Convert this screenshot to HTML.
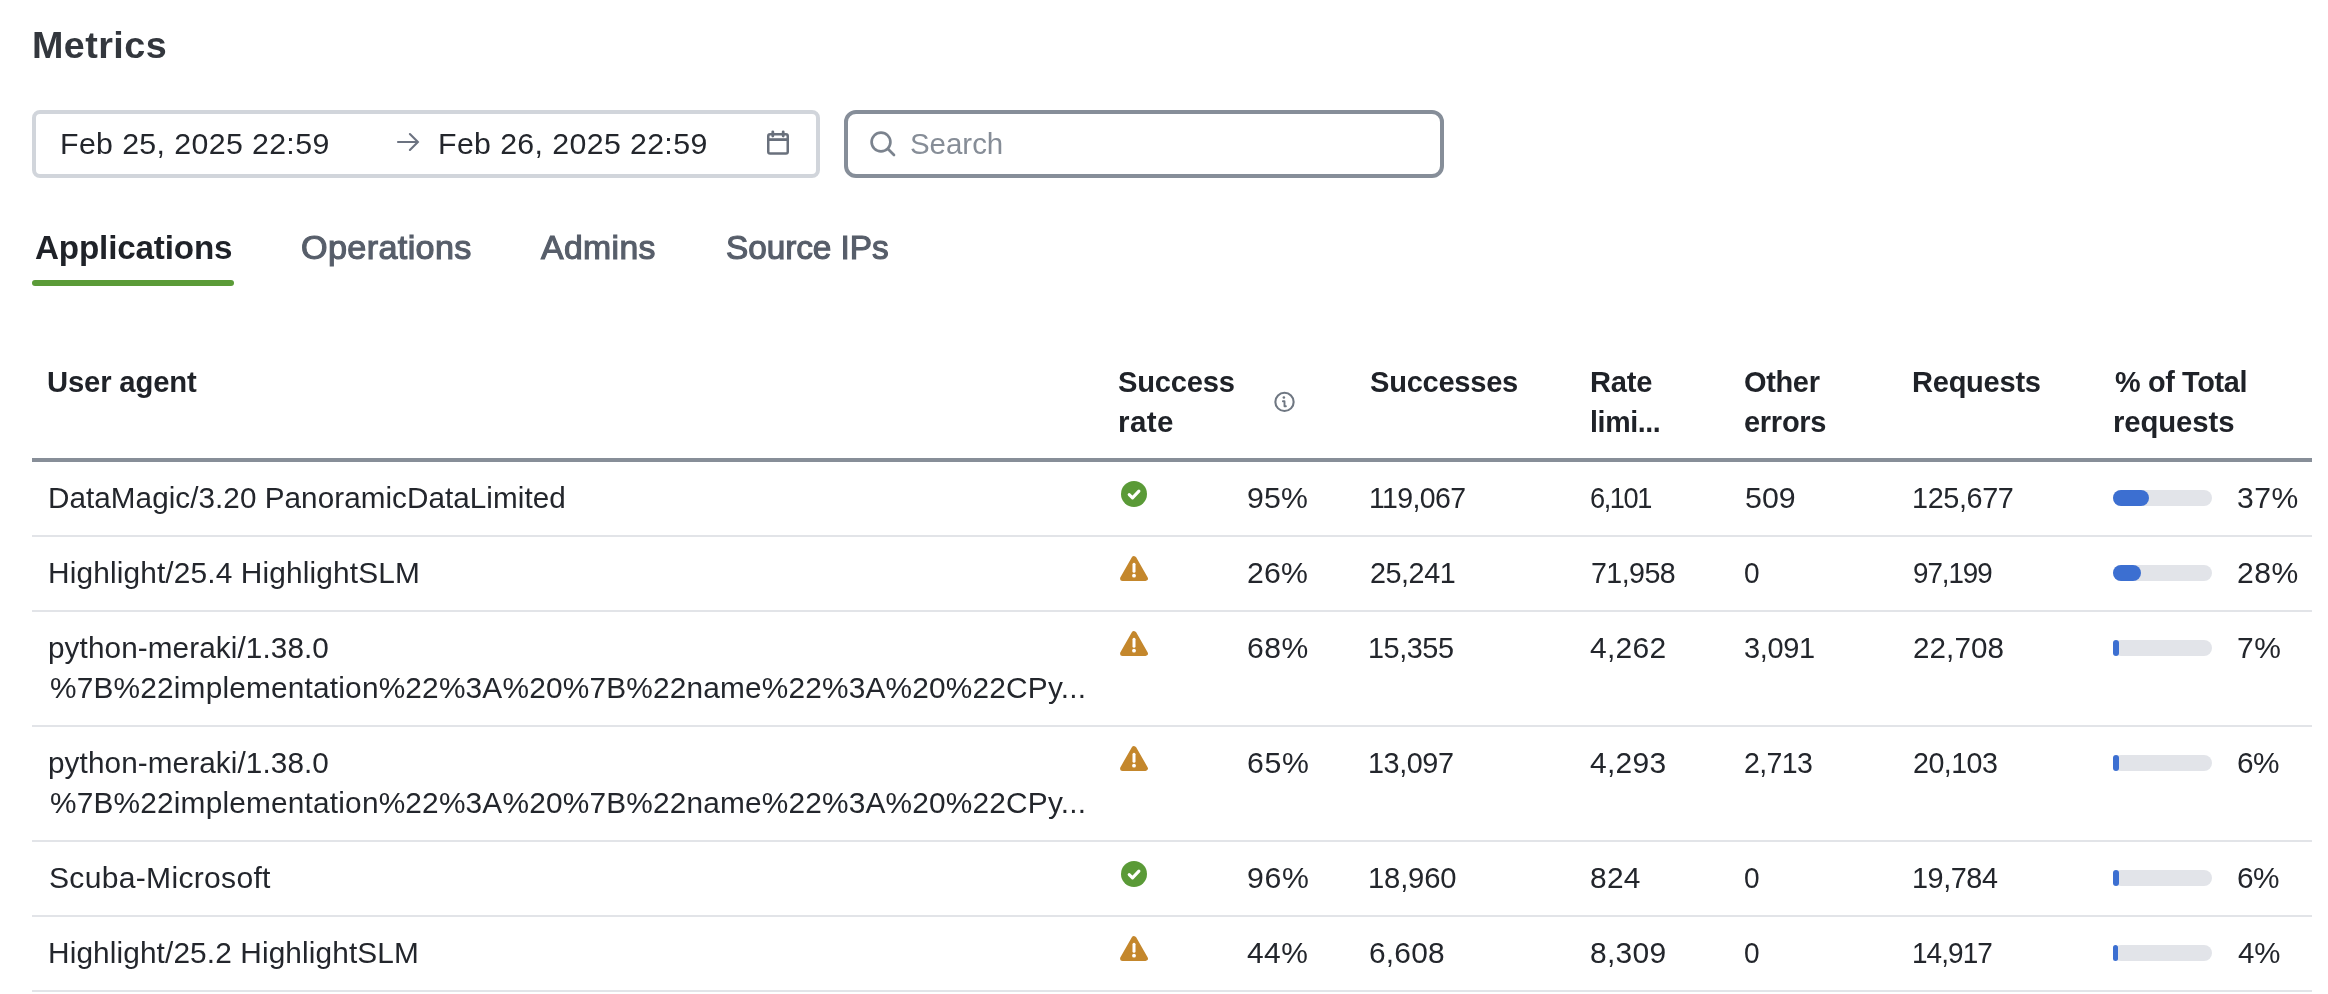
<!DOCTYPE html>
<html lang="en">
<head>
<meta charset="utf-8">
<title>Metrics</title>
<style>
  html, body { margin: 0; padding: 0; background: #ffffff; }
  body {
    width: 2328px; height: 994px; position: relative; overflow: hidden;
    font-family: "Liberation Sans", sans-serif;
    color: #22252b;
  }
  h1 { margin: 0; }
  .abs { position: absolute; }
  .t { position: absolute; white-space: nowrap; font-size: 29.5px; line-height: 40px; color: #23262c; transform-origin: 0 0; }
  .h1 { font-size: 37px; line-height: 44px; font-weight: 700; color: #33373d; }
  .tab { font-size: 33.5px; line-height: 40px; font-weight: 400; color: #575e6a; -webkit-text-stroke: 1.15px #575e6a; }
  .tab.on { color: #1f2228; font-weight: 700; -webkit-text-stroke: 0; }
  .th { font-weight: 700; color: #1f2228; }
  .box { position: absolute; box-sizing: border-box; background: #fff; }
  .hr { position: absolute; left: 32px; width: 2280px; height: 2px; background: #e2e4e8; }
  .track { position: absolute; left: 2113px; width: 99px; height: 16px; border-radius: 8px; background: #e2e4e9; }
  .fill { position: absolute; left: 0; top: 0; height: 16px; border-radius: 8px; background: #3c6fd1; }
  svg { position: absolute; overflow: visible; }
</style>
</head>
<body>
<div id="page" style="position:absolute; left:0; top:0; width:2328px; height:994px; will-change:transform;">

<!-- Date range picker -->
<div class="box" style="left:32px; top:110px; width:788px; height:68px; border:4px solid #d1d5db; border-radius:8px;"></div>
<svg style="left:396px; top:131px;" width="24" height="22" viewBox="0 0 24 22" fill="none" stroke="#6b7280" stroke-width="2.1" stroke-linecap="round" stroke-linejoin="miter"><path d="M2 11H21.6M13.9 3L21.9 11L13.9 19"/></svg>
<svg style="left:766px; top:130px;" width="24" height="26" viewBox="0 0 24 26" fill="none" stroke="#69707c" stroke-width="2.5" stroke-linejoin="round" stroke-linecap="round"><rect x="2.25" y="4.2" width="19.5" height="19.3" rx="1.8"/><path d="M2.25 9.6H21.75" stroke-width="2.8" stroke-linecap="butt"/><path d="M6.8 1.8V6M17.2 1.8V6" stroke-width="2.8"/></svg>

<!-- Search -->
<div class="box" style="left:844px; top:110px; width:600px; height:68px; border:4px solid #868e99; border-radius:12px;"></div>
<svg style="left:868px; top:130px;" width="28" height="28" viewBox="0 0 28 28" fill="none" stroke="#7b838e" stroke-width="2.7" stroke-linecap="round"><circle cx="13" cy="12" r="9.4"/><path d="M19.8 18.8L26 25"/></svg>

<!-- Tabs underline -->
<div class="abs" style="left:32px; top:280px; width:202px; height:6px; border-radius:3px; background:#5b9b38;"></div>

<!-- Header info icon + header border -->
<svg style="left:1274px; top:392px;" width="21" height="21" viewBox="0 0 21 21" fill="none" stroke="#6f7782" stroke-width="2.1"><circle cx="10.5" cy="9.9" r="9.15"/><path d="M8.9 9.3H10.5V14.3H11.9" stroke-width="1.9" stroke-linecap="round" stroke-linejoin="round"/><circle cx="9.9" cy="5.5" r="1.3" fill="#6f7782" stroke="none"/></svg>
<div class="abs" style="left:32px; top:458px; width:2280px; height:4px; background:#878e98;"></div>

<!-- Text -->

<h1 class="t h1" style="left:31.95px; top:24px; letter-spacing:0.409px; transform:scaleX(1.0198);">Metrics</h1>
<div class="t" style="left:60.22px; top:124px; letter-spacing:0.380px; transform:scaleX(1.0263);">Feb 25, 2025 22:59</div>
<div class="t" style="left:438.22px; top:124px; letter-spacing:0.380px; transform:scaleX(1.0263);">Feb 26, 2025 22:59</div>
<div class="t" style="left:909.71px; top:124px; letter-spacing:-0.025px; transform:scaleX(0.9986);color:#868d97;">Search</div>
<div class="t tab on" role="tab" style="left:34.51px; top:228px; letter-spacing:-0.161px; transform:scaleX(0.9912);">Applications</div>
<div class="t tab" role="tab" style="left:300.98px; top:228px; letter-spacing:0.354px; transform:scaleX(1.0201);">Operations</div>
<div class="t tab" role="tab" style="left:541.16px; top:228px; letter-spacing:0.387px; transform:scaleX(1.0067);">Admins</div>
<div class="t tab" role="tab" style="left:725.50px; top:228px; letter-spacing:-0.070px; transform:scaleX(0.9961);">Source IPs</div>
<div class="t th" role="columnheader" style="left:46.95px; top:362px; letter-spacing:-0.154px; transform:scaleX(0.9909);">User agent</div>
<div class="t th" role="columnheader" style="left:1118.02px; top:362px; letter-spacing:-0.232px; transform:scaleX(0.9882);">Success</div>
<div class="t th" role="columnheader" style="left:1118.00px; top:402px; letter-spacing:0.374px; transform:scaleX(1.0024);">rate</div>
<div class="t th" role="columnheader" style="left:1369.51px; top:362px; letter-spacing:-0.269px; transform:scaleX(0.9859);">Successes</div>
<div class="t th" role="columnheader" style="left:1589.52px; top:362px; letter-spacing:-0.253px; transform:scaleX(0.9877);">Rate</div>
<div class="t th" role="columnheader" style="left:1589.55px; top:402px; letter-spacing:-0.387px; transform:scaleX(0.9688);">limi...</div>
<div class="t th" role="columnheader" style="left:1743.95px; top:362px; letter-spacing:-0.350px; transform:scaleX(0.9824);">Other</div>
<div class="t th" role="columnheader" style="left:1743.95px; top:402px; letter-spacing:-0.280px; transform:scaleX(0.9834);">errors</div>
<div class="t th" role="columnheader" style="left:1911.53px; top:362px; letter-spacing:-0.272px; transform:scaleX(0.9856);">Requests</div>
<div class="t th" role="columnheader" style="left:2114.83px; top:362px; letter-spacing:-0.355px; transform:scaleX(0.9770);">% of Total</div>
<div class="t th" role="columnheader" style="left:2113.01px; top:402px; letter-spacing:-0.108px; transform:scaleX(0.9938);">requests</div>
<!-- row -->
<svg style="left:1121px; top:481px;" width="26" height="26" viewBox="0 0 26 26"><circle cx="13" cy="13" r="13" fill="#5a9a37"/><path d="M8.2 13.7L11.5 16.9L17.9 10.1" fill="none" stroke="#fff" stroke-width="3.1" stroke-linecap="round" stroke-linejoin="round"/></svg>
<div class="track" style="top:490px;"><div class="fill" style="width:36px;"></div></div>
<div class="hr" style="top:535px;"></div>
<div class="t" style="left:48.39px; top:478px; letter-spacing:0.066px; transform:scaleX(1.0044);">DataMagic/3.20 PanoramicDataLimited</div>
<div class="t" style="left:1247.02px; top:478px; letter-spacing:0.183px; transform:scaleX(1.0246);">95%</div>
<div class="t" style="left:1368.58px; top:478px; letter-spacing:-0.627px; transform:scaleX(0.9641);">119,067</div>
<div class="t" style="left:1590.12px; top:478px; letter-spacing:-1.527px; transform:scaleX(0.9208);">6,101</div>
<div class="t" style="left:1744.80px; top:478px; letter-spacing:0.024px; transform:scaleX(1.0272);">509</div>
<div class="t" style="left:1911.55px; top:478px; letter-spacing:-0.405px; transform:scaleX(0.9769);">125,677</div>
<div class="t" style="left:2237.25px; top:478px; letter-spacing:0.551px; transform:scaleX(1.0201);">37%</div>
<!-- row -->
<svg style="left:1120px; top:556px;" width="28" height="25" viewBox="0 0 28 25"><path d="M14 2.6L25.4 22.4H2.6Z" fill="#c4872c" stroke="#c4872c" stroke-width="5" stroke-linejoin="round"/><path d="M14 8.3V15.2" stroke="#fff" stroke-width="3" stroke-linecap="round"/><circle cx="14" cy="19.7" r="1.9" fill="#fff"/></svg>
<div class="track" style="top:565px;"><div class="fill" style="width:28px;"></div></div>
<div class="hr" style="top:610px;"></div>
<div class="t" style="left:48.03px; top:553px; letter-spacing:0.128px; transform:scaleX(1.0122);">Highlight/25.4 HighlightSLM</div>
<div class="t" style="left:1247.02px; top:553px; letter-spacing:0.183px; transform:scaleX(1.0246);">26%</div>
<div class="t" style="left:1369.53px; top:553px; letter-spacing:-0.462px; transform:scaleX(0.9744);">25,241</div>
<div class="t" style="left:1591.03px; top:553px; letter-spacing:-0.568px; transform:scaleX(0.9688);">71,958</div>
<div class="t" style="left:1743.97px; top:553px; letter-spacing:0.000px; transform:scaleX(0.9500);">0</div>
<div class="t" style="left:1912.57px; top:553px; letter-spacing:-1.117px; transform:scaleX(0.9403);">97,199</div>
<div class="t" style="left:2237.25px; top:553px; letter-spacing:0.551px; transform:scaleX(1.0201);">28%</div>
<!-- row -->
<svg style="left:1120px; top:631px;" width="28" height="25" viewBox="0 0 28 25"><path d="M14 2.6L25.4 22.4H2.6Z" fill="#c4872c" stroke="#c4872c" stroke-width="5" stroke-linejoin="round"/><path d="M14 8.3V15.2" stroke="#fff" stroke-width="3" stroke-linecap="round"/><circle cx="14" cy="19.7" r="1.9" fill="#fff"/></svg>
<div class="track" style="top:640px;"><div class="fill" style="width:6px;"></div></div>
<div class="hr" style="top:725px;"></div>
<div class="t" style="left:48.49px; top:628px; letter-spacing:0.098px; transform:scaleX(1.0068);">python-meraki/1.38.0</div>
<div class="t" style="left:50.49px; top:668px; letter-spacing:0.190px; transform:scaleX(1.0106);">%7B%22implementation%22%3A%20%7B%22name%22%3A%20%22CPy...</div>
<div class="t" style="left:1247.25px; top:628px; letter-spacing:0.551px; transform:scaleX(1.0201);">68%</div>
<div class="t" style="left:1367.76px; top:628px; letter-spacing:-0.436px; transform:scaleX(0.9756);">15,355</div>
<div class="t" style="left:1590.49px; top:628px; letter-spacing:0.277px; transform:scaleX(1.0156);">4,262</div>
<div class="t" style="left:1743.53px; top:628px; letter-spacing:-0.351px; transform:scaleX(0.9806);">3,091</div>
<div class="t" style="left:1913.06px; top:628px; letter-spacing:0.075px; transform:scaleX(1.0043);">22,708</div>
<div class="t" style="left:2237.26px; top:628px; letter-spacing:0.615px; transform:scaleX(1.0156);">7%</div>
<!-- row -->
<svg style="left:1120px; top:746px;" width="28" height="25" viewBox="0 0 28 25"><path d="M14 2.6L25.4 22.4H2.6Z" fill="#c4872c" stroke="#c4872c" stroke-width="5" stroke-linejoin="round"/><path d="M14 8.3V15.2" stroke="#fff" stroke-width="3" stroke-linecap="round"/><circle cx="14" cy="19.7" r="1.9" fill="#fff"/></svg>
<div class="track" style="top:755px;"><div class="fill" style="width:5.5px;"></div></div>
<div class="hr" style="top:840px;"></div>
<div class="t" style="left:48.49px; top:743px; letter-spacing:0.098px; transform:scaleX(1.0068);">python-meraki/1.38.0</div>
<div class="t" style="left:50.49px; top:783px; letter-spacing:0.190px; transform:scaleX(1.0106);">%7B%22implementation%22%3A%20%7B%22name%22%3A%20%22CPy...</div>
<div class="t" style="left:1247.03px; top:743px; letter-spacing:0.671px; transform:scaleX(1.0241);">65%</div>
<div class="t" style="left:1367.76px; top:743px; letter-spacing:-0.436px; transform:scaleX(0.9756);">13,097</div>
<div class="t" style="left:1590.49px; top:743px; letter-spacing:0.277px; transform:scaleX(1.0156);">4,293</div>
<div class="t" style="left:1743.56px; top:743px; letter-spacing:-0.614px; transform:scaleX(0.9665);">2,713</div>
<div class="t" style="left:1912.54px; top:743px; letter-spacing:-0.541px; transform:scaleX(0.9702);">20,103</div>
<div class="t" style="left:2237.05px; top:743px; letter-spacing:-0.619px; transform:scaleX(1.0094);">6%</div>
<!-- row -->
<svg style="left:1121px; top:861px;" width="26" height="26" viewBox="0 0 26 26"><circle cx="13" cy="13" r="13" fill="#5a9a37"/><path d="M8.2 13.7L11.5 16.9L17.9 10.1" fill="none" stroke="#fff" stroke-width="3.1" stroke-linecap="round" stroke-linejoin="round"/></svg>
<div class="track" style="top:870px;"><div class="fill" style="width:5.5px;"></div></div>
<div class="hr" style="top:915px;"></div>
<div class="t" style="left:49.25px; top:858px; letter-spacing:0.289px; transform:scaleX(1.0195);">Scuba-Microsoft</div>
<div class="t" style="left:1247.03px; top:858px; letter-spacing:0.671px; transform:scaleX(1.0241);">96%</div>
<div class="t" style="left:1367.96px; top:858px; letter-spacing:-0.177px; transform:scaleX(0.9899);">18,960</div>
<div class="t" style="left:1590.49px; top:858px; letter-spacing:0.308px; transform:scaleX(1.0130);">824</div>
<div class="t" style="left:1743.97px; top:858px; letter-spacing:0.000px; transform:scaleX(0.9500);">0</div>
<div class="t" style="left:1911.55px; top:858px; letter-spacing:-0.436px; transform:scaleX(0.9756);">19,784</div>
<div class="t" style="left:2237.05px; top:858px; letter-spacing:-0.619px; transform:scaleX(1.0094);">6%</div>
<!-- row -->
<svg style="left:1120px; top:936px;" width="28" height="25" viewBox="0 0 28 25"><path d="M14 2.6L25.4 22.4H2.6Z" fill="#c4872c" stroke="#c4872c" stroke-width="5" stroke-linejoin="round"/><path d="M14 8.3V15.2" stroke="#fff" stroke-width="3" stroke-linecap="round"/><circle cx="14" cy="19.7" r="1.9" fill="#fff"/></svg>
<div class="track" style="top:945px;"><div class="fill" style="width:4.5px;"></div></div>
<div class="hr" style="top:990px;"></div>
<div class="t" style="left:48.03px; top:933px; letter-spacing:0.109px; transform:scaleX(1.0108);">Highlight/25.2 HighlightSLM</div>
<div class="t" style="left:1246.71px; top:933px; letter-spacing:0.431px; transform:scaleX(1.0151);">44%</div>
<div class="t" style="left:1369.49px; top:933px; letter-spacing:0.216px; transform:scaleX(1.0123);">6,608</div>
<div class="t" style="left:1590.49px; top:933px; letter-spacing:0.277px; transform:scaleX(1.0156);">8,309</div>
<div class="t" style="left:1743.97px; top:933px; letter-spacing:0.000px; transform:scaleX(0.9500);">0</div>
<div class="t" style="left:1911.62px; top:933px; letter-spacing:-0.977px; transform:scaleX(0.9468);">14,917</div>
<div class="t" style="left:2237.50px; top:933px; letter-spacing:-0.125px; transform:scaleX(0.9970);">4%</div>

</div>
</body>
</html>
